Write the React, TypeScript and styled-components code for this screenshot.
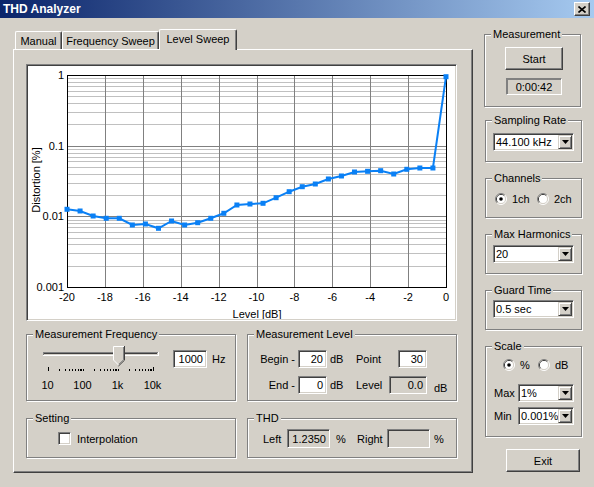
import React from "react";
import styled, { createGlobalStyle } from "styled-components";

const GlobalStyle = createGlobalStyle`
  html, body { margin: 0; padding: 0; background: #D4D0C8; }
  body { font-family: "Liberation Sans", Arial, sans-serif; font-size: 11px; color: #000; }
  * { box-sizing: border-box; }
`;

const Window = styled.div`
  width: 594px;
  height: 487px;
  background: #d4d0c8;
  display: flex;
  flex-direction: column;
  overflow: hidden;
`;

const TitleBar = styled.div`
  height: 18px;
  flex: none;
  display: flex;
  align-items: center;
  justify-content: space-between;
  padding: 0 4px 0 3px;
  background: linear-gradient(to right, #0a246a, #a6caf0);
  color: #fff;
  font-weight: bold;
  font-size: 12px;
`;

const CloseButton = styled.div`
  width: 16px;
  height: 14px;
  background: #d4d0c8;
  border: 1px solid;
  border-color: #fff #404040 #404040 #fff;
  box-shadow: inset -1px -1px 0 #808080;
  display: flex;
  align-items: center;
  justify-content: center;
`;

const Body = styled.div`
  display: flex;
  align-items: flex-start;
  flex: 1;
`;

const LeftColumn = styled.div`
  margin: 11px 0 0 13px;
  width: 460px;
  display: flex;
  flex-direction: column;
`;

const TabStrip = styled.div`
  display: flex;
  align-items: flex-start;
  height: 20px;
  padding-left: 2px;
  position: relative;
  z-index: 1;
`;

const Tab = styled.div<{ $active?: boolean; $w: number }>`
  width: ${(p) => p.$w}px;
  height: ${(p) => (p.$active ? 21 : 18)}px;
  margin-top: ${(p) => (p.$active ? 0 : 2)}px;
  padding-bottom: ${(p) => (p.$active ? 2 : 0)}px;
  display: flex;
  align-items: center;
  justify-content: center;
  background: #d4d0c8;
  border-top: 1px solid #fff;
  border-left: 1px solid #fff;
  border-right: 1px solid #404040;
  box-shadow: inset -1px 0 0 #808080;
  border-radius: 2px 2px 0 0;
  white-space: nowrap;
`;

const TabPanel = styled.div`
  height: 424px;
  border: 1px solid;
  border-color: #fff #404040 #404040 #fff;
  box-shadow: inset -1px -1px 0 #808080;
  padding: 14px 14px 0 12px;
  display: flex;
  flex-direction: column;
`;

const ChartFrame = styled.div`
  width: 431px;
  height: 257px;
  background: #fff;
  border: 1px solid;
  border-color: #808080 #fff #fff #808080;
  box-shadow: inset 1px 1px 0 #404040, inset -1px -1px 0 #d4d0c8;
  padding: 1px;
`;

const ChartSvg = styled.svg`
  display: block;
  font-family: "Liberation Sans", Arial, sans-serif;
  font-size: 11px;
`;

const GroupGrid = styled.div`
  margin-top: 6px;
  display: grid;
  grid-template-columns: 211px 211px;
  column-gap: 10px;
  row-gap: 10px;
`;

const Group = styled.fieldset<{ $w: number; $h: number; $ml?: number; $mb?: number }>`
  margin: 0 0 ${(p) => p.$mb ?? 0}px ${(p) => p.$ml ?? 0}px;
  padding: 0;
  min-width: 0;
  width: ${(p) => p.$w}px;
  height: ${(p) => p.$h}px;
  border: 1px solid #808080;
  box-shadow: 1px 1px 0 #fff, inset 1px 1px 0 #fff;
`;

const Legend = styled.legend`
  margin-left: 6px;
  padding: 0 2px;
  background: #d4d0c8;
  line-height: 14px;
  font-size: 11px;
  white-space: nowrap;
`;

const FreqBody = styled.div`
  display: flex;
  align-items: flex-start;
  padding: 3px 0 0 3px;
`;

const SliderColumn = styled.div`
  width: 140px;
  display: flex;
  flex-direction: column;
`;

const SliderSvg = styled.svg`
  display: block;
  margin-left: 10px;
`;

const ScaleLabels = styled.div`
  display: flex;
  margin-top: 6px;
  line-height: 14px;
`;

const ScaleLabel = styled.div`
  width: 35px;
  text-align: center;
`;

const FieldGroup = styled.div`
  display: flex;
  align-items: center;
  margin: 6px 0 0 3px;
  gap: 5px;
`;

const Field = styled.div<{ $w: number; $h?: number; $ro?: boolean; $align?: string }>`
  width: ${(p) => p.$w}px;
  height: ${(p) => p.$h ?? 18}px;
  background: ${(p) => (p.$ro ? "#d4d0c8" : "#fff")};
  border: 1px solid;
  border-color: #808080 #fff #fff #808080;
  box-shadow: inset 1px 1px 0 #404040, inset -1px -1px 0 #d4d0c8;
  display: flex;
  align-items: center;
  justify-content: ${(p) => p.$align ?? "flex-end"};
  padding: 0 3px;
  white-space: nowrap;
`;

const LevelGrid = styled.div`
  display: grid;
  grid-template-columns: 48px 29px 29px 33px 38px auto;
  grid-auto-rows: 18px;
  row-gap: 8px;
  padding: 9px 0 0 2px;
  align-items: center;
`;

const Cell = styled.div<{ $align?: string; $pl?: number; $pr?: number; $self?: string }>`
  text-align: ${(p) => p.$align ?? "left"};
  padding-left: ${(p) => p.$pl ?? 0}px;
  padding-right: ${(p) => p.$pr ?? 0}px;
  justify-self: ${(p) => p.$self ?? "stretch"};
  align-self: ${(p) => (p.$self === "lower" ? "end" : "center")};
  white-space: nowrap;
`;

const ThdGrid = styled.div`
  display: grid;
  grid-template-columns: 24px 43px 27px 30px 43px auto;
  grid-auto-rows: 19px;
  align-items: center;
  padding: 4px 0 0 15px;
`;

const CheckRow = styled.div`
  display: flex;
  align-items: center;
  height: 19px;
  margin-top: 4px;
  padding-left: 31px;
  gap: 6px;
`;

const CheckBox = styled.div`
  width: 13px;
  height: 13px;
  background: #fff;
  border: 1px solid;
  border-color: #808080 #fff #fff #808080;
  box-shadow: inset 1px 1px 0 #404040, inset -1px -1px 0 #d4d0c8;
`;

const RightColumn = styled.div`
  margin: 9px 0 0 11px;
  display: flex;
  flex-direction: column;
  align-items: flex-start;
  gap: 9px;
`;

const GroupBody = styled.div<{ $pt: number; $pl: number }>`
  padding: ${(p) => p.$pt}px 0 0 ${(p) => p.$pl}px;
  display: flex;
  flex-direction: column;
  align-items: flex-start;
`;

const Button = styled.div<{ $w: number; $h: number; $mt?: number; $ml?: number }>`
  width: ${(p) => p.$w}px;
  height: ${(p) => p.$h}px;
  margin: ${(p) => p.$mt ?? 0}px 0 0 ${(p) => p.$ml ?? 0}px;
  background: #d4d0c8;
  border: 1px solid;
  border-color: #fff #404040 #404040 #fff;
  box-shadow: inset -1px -1px 0 #808080;
  display: flex;
  align-items: center;
  justify-content: center;
  font-size: 11px;
`;

const Readout = styled.div`
  width: 56px;
  height: 17px;
  margin: 8px 0 0 21px;
  border: 1px solid;
  border-color: #808080 #fff #fff #808080;
  box-shadow: inset 1px 1px 0 #808080;
  display: flex;
  align-items: center;
  justify-content: center;
`;

const Select = styled.div<{ $w: number }>`
  width: ${(p) => p.$w}px;
  height: 18px;
  display: flex;
  align-items: stretch;
  background: #fff;
  border: 1px solid;
  border-color: #808080 #fff #fff #808080;
  box-shadow: inset 1px 1px 0 #404040, inset -1px -1px 0 #d4d0c8;
  padding: 1px;
`;

const SelectText = styled.div`
  flex: 1;
  min-width: 0;
  padding-left: 1px;
  line-height: 14px;
  white-space: nowrap;
  overflow: hidden;
`;

const DropButton = styled.div`
  width: 14px;
  flex: none;
  background: #d4d0c8;
  border: 1px solid;
  border-color: #d4d0c8 #404040 #404040 #d4d0c8;
  box-shadow: inset 1px 1px 0 #fff, inset -1px -1px 0 #808080;
  display: flex;
  align-items: center;
  justify-content: center;
`;

const RadioRow = styled.div`
  display: flex;
  align-items: center;
  height: 14px;
`;

const RadioItem = styled.div<{ $w: number }>`
  width: ${(p) => p.$w}px;
  display: flex;
  align-items: center;
  gap: 5px;
`;

const LabeledRow = styled.div<{ $mt: number }>`
  display: flex;
  align-items: center;
  margin-top: ${(p) => p.$mt}px;
`;

const RowLabel = styled.div`
  width: 24px;
`;

/* ---------- drawings ---------- */

const CloseIcon = () => (
  <svg width="8" height="7" viewBox="0 0 8 7">
    <path d="M0.5 0.5 L7.5 6.5 M7.5 0.5 L0.5 6.5" stroke="#000" strokeWidth="1.6" />
  </svg>
);

const Arrow = () => (
  <svg width="7" height="4" viewBox="0 0 7 4">
    <polygon points="0,0 7,0 3.5,4" fill="#000" />
  </svg>
);

const Radio: React.FC<{ checked?: boolean }> = ({ checked }) => (
  <svg width="12" height="12" viewBox="0 0 12 12">
    <path d="M2.11 9.89 A5.5 5.5 0 0 1 9.89 2.11" stroke="#808080" fill="none" />
    <path d="M9.89 2.11 A5.5 5.5 0 0 1 2.11 9.89" stroke="#fff" fill="none" />
    <path d="M2.82 9.18 A4.5 4.5 0 0 1 9.18 2.82" stroke="#404040" fill="none" />
    <path d="M9.18 2.82 A4.5 4.5 0 0 1 2.82 9.18" stroke="#d4d0c8" fill="none" />
    <circle cx="6" cy="6" r="4" fill="#fff" />
    {checked && <circle cx="6" cy="6" r="1.8" fill="#000" />}
  </svg>
);

const DropSelect: React.FC<{ w: number; value: string }> = ({ w, value }) => (
  <Select $w={w}>
    <SelectText>{value}</SelectText>
    <DropButton>
      <Arrow />
    </DropButton>
  </Select>
);

const Slider = () => {
  const ticks: { x: number; major: boolean }[] = [];
  for (let d = 1; d <= 4; d++) {
    for (let m = 1; m <= 9; m++) {
      const v = m * Math.pow(10, d);
      if (v > 10000) break;
      ticks.push({ x: 8 + (Math.log10(v) - 1) * 35, major: v === 10 || v === 10000 });
    }
  }
  ticks.push({ x: 8 + 3 * 35, major: true });
  return (
    <SliderSvg width="125" height="28" viewBox="0 0 125 28">
      <line x1="3" y1="8.5" x2="118" y2="8.5" stroke="#808080" />
      <line x1="4" y1="9.5" x2="117" y2="9.5" stroke="#404040" />
      <line x1="4" y1="10.5" x2="117" y2="10.5" stroke="#d4d0c8" />
      <line x1="3" y1="11.5" x2="119" y2="11.5" stroke="#fff" />
      <line x1="3.5" y1="8" x2="3.5" y2="11" stroke="#808080" />
      <line x1="118.5" y1="8" x2="118.5" y2="12" stroke="#fff" />
      <polygon points="73,2 84,2 84,16 78.5,21.5 73,16" fill="#d4d0c8" />
      <polyline points="73.5,16 73.5,2.5 84,2.5" stroke="#fff" fill="none" />
      <polyline points="84.5,2 84.5,16.2 78.5,22" stroke="#404040" fill="none" />
      <polyline points="83.5,3 83.5,15.8 78.5,20.6" stroke="#808080" fill="none" />
      <line x1="73.5" y1="16" x2="78.5" y2="21" stroke="#fff" />
      {ticks.map((t, i) => (
        <line
          key={i}
          x1={Math.round(t.x) + 0.5}
          x2={Math.round(t.x) + 0.5}
          y1={t.major ? 23 : 25}
          y2={27}
          stroke="#000"
        />
      ))}
    </SliderSvg>
  );
};

/* ---------- chart ---------- */

const DATA = [
  0.01258, 0.0119, 0.01011, 0.00938, 0.00938, 0.00754, 0.00779, 0.00677, 0.00859, 0.00754,
  0.00813, 0.00938, 0.01104, 0.01447, 0.01494, 0.01529, 0.01835, 0.02232, 0.02626, 0.02868,
  0.03377, 0.03723, 0.0424, 0.04338, 0.04424, 0.03972, 0.04629, 0.04831, 0.04831, 0.946,
];

const PX = 39;
const PY = 9;
const PW = 379;
const PH = 212;
const DEC = PH / 3;
const yOf = (v: number) => PY + -Math.log10(v) * DEC;
const xOf = (db: number) => PX + ((db + 20) / 20) * PW;
const crisp = (n: number) => Math.round(n) + 0.5;

const Chart = () => {
  const minor: number[] = [];
  for (let k = 0; k < 3; k++) {
    for (let m = 2; m <= 9; m++) minor.push(yOf(m * Math.pow(10, -(k + 1))));
  }
  const major = [0.1, 0.01].map(yOf);
  const xs = Array.from({ length: 11 }, (_, i) => -20 + i * 2);
  const yLabels: [string, number][] = [
    ["1", 1],
    ["0.1", 0.1],
    ["0.01", 0.01],
    ["0.001", 0.001],
  ];
  const pts = DATA.map((v, i) => [xOf(-20 + (i * 20) / 29), yOf(v)]);
  return (
    <ChartSvg width="427" height="253" viewBox="0 0 427 253">
      {minor.map((y, i) => (
        <line key={"m" + i} x1={PX} x2={PX + PW} y1={crisp(y)} y2={crisp(y)} stroke="#c0c0c0" />
      ))}
      {major.map((y, i) => (
        <line key={"M" + i} x1={PX} x2={PX + PW} y1={crisp(y)} y2={crisp(y)} stroke="#808080" />
      ))}
      {xs.slice(1, -1).map((d) => (
        <line key={"v" + d} x1={crisp(xOf(d))} x2={crisp(xOf(d))} y1={PY} y2={PY + PH} stroke="#808080" />
      ))}
      <rect x={PX + 0.5} y={PY + 0.5} width={PW} height={PH} fill="none" stroke="#000" />
      {yLabels.map(([t, v]) => (
        <text key={t} x={36} y={yOf(v) + 4} textAnchor="end">
          {t}
        </text>
      ))}
      {xs.map((d) => (
        <text key={"x" + d} x={xOf(d)} y={235} textAnchor="middle">
          {d}
        </text>
      ))}
      <text x={229} y={252} textAnchor="middle">
        Level [dB]
      </text>
      <text transform="translate(12,114) rotate(-90)" textAnchor="middle">
        Distortion [%]
      </text>
      <polyline
        points={pts.map((p) => p.join(",")).join(" ")}
        fill="none"
        stroke="#0a80f5"
        strokeWidth="2"
      />
      {pts.map(([x, y], i) => (
        <rect key={"p" + i} x={x - 2.5} y={y - 2.5} width="5" height="5" fill="#0a80f5" />
      ))}
    </ChartSvg>
  );
};

export default function App() {
  return (
    <>
      <GlobalStyle />
      <Window>
        <TitleBar>
          <span>THD Analyzer</span>
          <CloseButton>
            <CloseIcon />
          </CloseButton>
        </TitleBar>
        <Body>
          <LeftColumn>
            <TabStrip>
              <Tab $w={47}>Manual</Tab>
              <Tab $w={97}>Frequency Sweep</Tab>
              <Tab $w={78} $active>
                Level Sweep
              </Tab>
            </TabStrip>
            <TabPanel>
              <ChartFrame>
                <Chart />
              </ChartFrame>
              <GroupGrid>
                <Group $w={210} $h={74}>
                  <Legend>Measurement Frequency</Legend>
                  <FreqBody>
                    <SliderColumn>
                      <Slider />
                      <ScaleLabels>
                        <ScaleLabel>10</ScaleLabel>
                        <ScaleLabel>100</ScaleLabel>
                        <ScaleLabel>1k</ScaleLabel>
                        <ScaleLabel>10k</ScaleLabel>
                      </ScaleLabels>
                    </SliderColumn>
                    <FieldGroup>
                      <Field $w={34}>1000</Field>
                      <span>Hz</span>
                    </FieldGroup>
                  </FreqBody>
                </Group>
                <Group $w={210} $h={74}>
                  <Legend>Measurement Level</Legend>
                  <LevelGrid>
                    <Cell $align="right" $pr={3}>Begin -</Cell>
                    <Field $w={29}>20</Field>
                    <Cell $pl={3}>dB</Cell>
                    <Cell>Point</Cell>
                    <Cell $self="end">
                      <Field $w={29}>30</Field>
                    </Cell>
                    <Cell />
                    <Cell $align="right" $pr={3}>End -</Cell>
                    <Field $w={29}>0</Field>
                    <Cell $pl={3}>dB</Cell>
                    <Cell>Level</Cell>
                    <Field $w={38} $ro>0.0</Field>
                    <Cell $pl={7} $self="lower">dB</Cell>
                  </LevelGrid>
                </Group>
                <Group $w={210} $h={47}>
                  <Legend>Setting</Legend>
                  <CheckRow>
                    <CheckBox />
                    <span>Interpolation</span>
                  </CheckRow>
                </Group>
                <Group $w={210} $h={47}>
                  <Legend>THD</Legend>
                  <ThdGrid>
                    <Cell>Left</Cell>
                    <Field $w={43} $h={19} $ro>1.2350</Field>
                    <Cell $pl={6}>%</Cell>
                    <Cell>Right</Cell>
                    <Field $w={43} $h={19} $ro />
                    <Cell $pl={4}>%</Cell>
                  </ThdGrid>
                </Group>
              </GroupGrid>
            </TabPanel>
          </LeftColumn>
          <RightColumn>
            <Group $w={97} $h={80} $mb={-3}>
              <Legend>Measurement</Legend>
              <GroupBody $pt={6} $pl={20}>
                <Button $w={58} $h={23}>Start</Button>
              </GroupBody>
              <Readout>0:00:42</Readout>
            </Group>
            <Group $w={97} $h={49} $ml={1}>
              <Legend>Sampling Rate</Legend>
              <GroupBody $pt={6} $pl={7}>
                <DropSelect w={81} value="44.100 kHz" />
              </GroupBody>
            </Group>
            <Group $w={97} $h={47} $ml={1}>
              <Legend>Channels</Legend>
              <GroupBody $pt={7} $pl={9}>
                <RadioRow>
                  <RadioItem $w={42}>
                    <Radio checked />
                    <span>1ch</span>
                  </RadioItem>
                  <RadioItem $w={40}>
                    <Radio />
                    <span>2ch</span>
                  </RadioItem>
                </RadioRow>
              </GroupBody>
            </Group>
            <Group $w={97} $h={47} $ml={1}>
              <Legend>Max Harmonics</Legend>
              <GroupBody $pt={4} $pl={7}>
                <DropSelect w={81} value="20" />
              </GroupBody>
            </Group>
            <Group $w={97} $h={47} $ml={1}>
              <Legend>Guard Time</Legend>
              <GroupBody $pt={3} $pl={7}>
                <DropSelect w={81} value="0.5 sec" />
              </GroupBody>
            </Group>
            <Group $w={97} $h={98} $ml={1}>
              <Legend>Scale</Legend>
              <GroupBody $pt={5} $pl={17}>
                <RadioRow>
                  <RadioItem $w={35}>
                    <Radio checked />
                    <span>%</span>
                  </RadioItem>
                  <RadioItem $w={35}>
                    <Radio />
                    <span>dB</span>
                  </RadioItem>
                </RadioRow>
              </GroupBody>
              <GroupBody $pt={0} $pl={8}>
                <LabeledRow $mt={12}>
                  <RowLabel>Max</RowLabel>
                  <DropSelect w={56} value="1%" />
                </LabeledRow>
                <LabeledRow $mt={5}>
                  <RowLabel>Min</RowLabel>
                  <DropSelect w={56} value="0.001%" />
                </LabeledRow>
              </GroupBody>
            </Group>
            <Button $w={74} $h={23} $mt={3} $ml={22}>
              Exit
            </Button>
          </RightColumn>
        </Body>
      </Window>
    </>
  );
}
